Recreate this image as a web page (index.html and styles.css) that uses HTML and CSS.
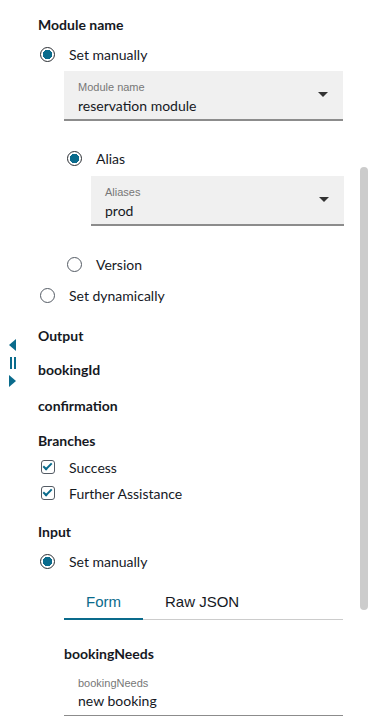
FILE: index.html
```html
<!DOCTYPE html>
<html lang="en">
<head>
  <meta charset="UTF-8">
  <meta name="viewport" content="width=device-width, initial-scale=1.0">
  <title>Module settings</title>
  <link rel="stylesheet" href="styles.css">
</head>
<body>

  <div class="panel">
    <div class="gutter">
      <div class="resize-handle">
        <span class="arrow-left"></span>
        <span class="bars"></span>
        <span class="arrow-right"></span>
      </div>
    </div>

    <div class="content">
      <div class="section-title">Module name</div>

      <label class="radio-row">
        <span class="radio checked"></span> Set manually
      </label>

      <div class="select select-module">
        <div class="select-label">Module name</div>
        <div class="select-value">reservation module</div>
        <span class="caret"></span>
      </div>

      <div class="nested">
        <label class="radio-row alias-row">
          <span class="radio checked"></span> Alias
        </label>
        <div class="select select-alias">
          <div class="select-label">Aliases</div>
          <div class="select-value">prod</div>
          <span class="caret"></span>
        </div>
        <label class="radio-row version-row">
          <span class="radio"></span> Version
        </label>
      </div>

      <label class="radio-row">
        <span class="radio"></span> Set dynamically
      </label>

      <div class="section-title output-title">Output</div>
      <div class="section-title field-title">bookingId</div>
      <div class="section-title field-title">confirmation</div>

      <div class="section-title branches-title">Branches</div>
      <label class="check-row">
        <span class="checkbox"></span> Success
      </label>
      <label class="check-row further-row">
        <span class="checkbox"></span> Further Assistance
      </label>

      <div class="section-title input-title">Input</div>
      <label class="radio-row">
        <span class="radio checked"></span> Set manually
      </label>

      <div class="tabs">
        <button class="tab active">Form</button>
        <button class="tab">Raw JSON</button>
      </div>

      <div class="section-title needs-title">bookingNeeds</div>
      <div class="text-field">
        <div class="select-label">bookingNeeds</div>
        <div class="select-value">new booking</div>
      </div>
    </div>

    <div class="scroll-track">
      <div class="scroll-thumb"></div>
    </div>
  </div>

</body>
</html>
```

FILE: styles.css
```css
body {
  font-family: Lato, "Liberation Sans", sans-serif;
  background-color: #fff;
  color: #16191f;
  margin: 0;
  padding: 0;
  font-size: 14px;
}
.panel {
  display: flex;
  width: 385px;
  height: 724px;
  overflow: hidden;
}
.gutter {
  width: 38px;
  flex-shrink: 0;
}
.resize-handle {
  display: flex;
  flex-direction: column;
  align-items: center;
  gap: 6px;
  width: 25px;
  padding-top: 339px;
}
.arrow-left {
  width: 0;
  height: 0;
  border-top: 6px solid transparent;
  border-bottom: 6px solid transparent;
  border-right: 7px solid #0a6b8c;
}
.arrow-right {
  width: 0;
  height: 0;
  border-top: 6px solid transparent;
  border-bottom: 6px solid transparent;
  border-left: 7px solid #0a6b8c;
}
.bars {
  width: 6px;
  height: 12px;
  border-left: 2px solid #0a6b8c;
  border-right: 2px solid #0a6b8c;
  box-sizing: border-box;
}
.content {
  width: 305px;
  flex-shrink: 0;
  padding-top: 15px;
}
.section-title {
  font-weight: 700;
  line-height: 20px;
  height: 20px;
}
.radio-row, .check-row {
  display: flex;
  align-items: center;
  gap: 14px;
  height: 24px;
  margin-top: 7px;
}
.radio {
  width: 15px;
  height: 15px;
  margin-left: 2px;
  border: 1.5px solid #545b64;
  border-radius: 50%;
  box-sizing: border-box;
  flex-shrink: 0;
}
.radio.checked {
  border-color: #2a2e33;
  background: radial-gradient(circle, #0a6b8c 0, #0a6b8c 4.5px, #fff 5px);
}
.select, .text-field {
  position: relative;
  margin-left: 26px;
  background-color: #f0f0f0;
  border-bottom: 2px solid #8c8c8c;
  box-sizing: border-box;
  height: 50px;
  padding: 10px 14px 0;
}
.select-module {
  width: 279px;
  margin-top: 5px;
}
.select-label {
  font-family: "Liberation Sans", Arial, sans-serif;
  font-size: 11px;
  color: #777;
  line-height: 12px;
}
.select-value {
  margin-top: 4px;
  line-height: 18px;
}
.caret {
  position: absolute;
  right: 15px;
  top: 21px;
  width: 0;
  height: 0;
  border-left: 5px solid transparent;
  border-right: 5px solid transparent;
  border-top: 5px solid #333;
}
.nested {
  padding-left: 27px;
}
.alias-row {
  margin-top: 25px;
}
.select-alias {
  width: 253px;
  margin-left: 26px;
  margin-top: 6px;
}
.version-row {
  margin-top: 26px;
}
.output-title {
  margin-top: 19px;
}
.field-title {
  margin-top: 14px;
}
.field-title + .field-title {
  margin-top: 16px;
}
.branches-title {
  margin-top: 15px;
}
.check-row {
  margin-top: 4px;
}
.further-row {
  margin-top: 2px;
}
.checkbox {
  position: relative;
  width: 14px;
  height: 14px;
  margin-left: 3px;
  border: 1.5px solid #545b64;
  border-radius: 3px;
  box-sizing: border-box;
  flex-shrink: 0;
}
.checkbox::after {
  content: "";
  position: absolute;
  left: 3px;
  top: 0px;
  width: 3px;
  height: 7px;
  border-right: 2px solid #0a6b8c;
  border-bottom: 2px solid #0a6b8c;
  transform: rotate(45deg);
}
.input-title {
  margin-top: 17px;
}
.tabs {
  display: flex;
  margin-left: 26px;
  margin-top: 13px;
  width: 279px;
  border-bottom: 1px solid #ccc;
}
.tab {
  font-family: "Liberation Sans", Arial, sans-serif;
  font-size: 15px;
  background: none;
  border: none;
  border-bottom: 2px solid transparent;
  margin-bottom: -1px;
  padding: 6px 22px 7px;
  height: 34px;
  color: #16191f;
  cursor: pointer;
}
.tab.active {
  color: #0a6b8c;
  border-bottom-color: #0a6b8c;
}
.needs-title {
  margin-left: 26px;
  margin-top: 24px;
}
.text-field {
  width: 279px;
  background-color: #fff;
  height: 48px;
  margin-top: 4px;
  padding-top: 9px;
  border-bottom-width: 1px;
}
.text-field .select-value {
  margin-top: 3px;
}
.scroll-track {
  width: 42px;
  flex-shrink: 0;
}
.scroll-thumb {
  width: 8px;
  height: 443px;
  margin-top: 167px;
  margin-left: 17px;
  background-color: #cccccc;
  border-radius: 4px;
}
```
